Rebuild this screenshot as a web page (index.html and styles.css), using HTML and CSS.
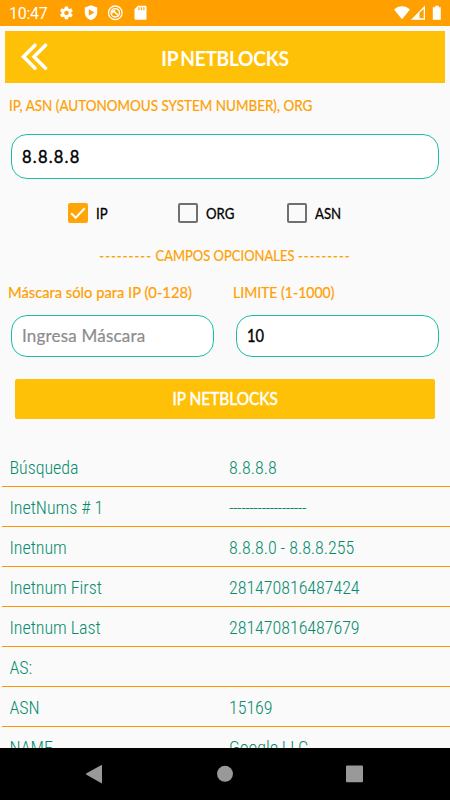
FILE: index.html
```html
<!DOCTYPE html>
<html lang="es">
<head>
<meta charset="utf-8">
<title>IP Netblocks</title>
<link rel="stylesheet" href="styles.css">
</head>
<body>
<div class="status">
  <span class="clock">10:47</span>
  <svg class="status-left" width="90" height="18" viewBox="0 0 90 18" fill="#fff">
    <g transform="translate(-.2 1.2) scale(.64)"><path d="M19.4 13a7.500 7.500 0 0 0 0-2l2.100-1.600a.5.5 0 0 0 .1-.7l-2-3.400a.5.5 0 0 0-.6-.2l-2.500 1a7.300 7.300 0 0 0-1.700-1l-.4-2.700a.5.5 0 0 0-.5-.4h-4a.5.5 0 0 0-.5.400L9 5.100a7.300 7.300 0 0 0-1.700 1l-2.500-1a.5.5 0 0 0-.6.200l-2 3.400a.5.5 0 0 0 .1.700L4.500 11a7.500 7.500 0 0 0 0 2l-2.200 1.600a.5.5 0 0 0-.1.700l2 3.400c.1.200.4.300.6.200l2.500-1c.5.400 1.100.7 1.700 1l.4 2.700c0 .2.200.4.500.4h4c.2 0 .5-.2.5-.4l.4-2.700a7.300 7.300 0 0 0 1.700-1l2.500 1c.2.100.5 0 .6-.2l2-3.400a.5.5 0 0 0-.1-.7zM12 15.500a3.500 3.500 0 1 1 0-7 3.500 3.500 0 0 1 0 7z"/></g>
    <path fill-rule="evenodd" d="M32 1.200l6.200 2.400v5c0 3.600-2.600 6.500-6.200 7.600-3.600-1.100-6.200-4-6.200-7.600v-5zM29.800 5.300v6.400L35.400 8.500z"/>
    <g fill="none" stroke="#fff" stroke-width="1.300"><circle cx="56.300" cy="8.800" r="6.800"/><circle cx="56.300" cy="8.800" r="4.200"/><path d="M53.300 9.200q.2-2.600 3-2.600M54.800 7.300l5 4.700" stroke-width="1.500"/></g>
    <path fill-rule="evenodd" d="M79 1.700h7.300a1.200 1.200 0 0 1 1.200 1.200v11.600a1.200 1.200 0 0 1-1.200 1.200h-9.600a1.200 1.200 0 0 1-1.200-1.200V5.200zM79.300 3.200v3h1.200v-3zM81.800 3.200v3H83v-3zM84.300 3.200v3h1.200v-3z"/>
  </svg>
  <svg class="status-right" width="50" height="18" viewBox="0 0 50 18" fill="#fff">
    <path d="M0 5.500C4.500 1 11.500 1 16 5.500L8 15.300z"/>
    <path fill-rule="evenodd" d="M31 1.500v14.300H17zM25.500 8.700v5.600h4.200V5z"/>
    <path d="M41.200 1.700h3.600v1.500h2v12.600h-8V3.200h2.400z"/>
  </svg>
</div>
<main class="screen">
  <header class="bar">
    <svg class="back" width="27" height="28" viewBox="0 0 27 28" fill="none" stroke="#fff" stroke-width="3.500" stroke-linecap="round"><path d="M14 2.200L2.500 13.700 14 25.200M24.500 2.200L13 13.700l11.500 11.500"/></svg>
    <h1 class="title">IP NETBLOCKS</h1>
  </header>
  <p class="label lead">IP, ASN (AUTONOMOUS SYSTEM NUMBER), ORG</p>
  <div class="field wide"><span class="value ip">8.8.8.8</span></div>
  <div class="checks">
    <div class="check"><svg width="20" height="20" viewBox="0 0 20 20"><rect width="20" height="20" rx="2" fill="#ffa505"/><path d="M3.200 10.300l4.500 4.500 9-9.500" fill="none" stroke="#fff" stroke-width="2"/></svg><span>IP</span></div>
    <div class="check"><i class="box"></i><span>ORG</span></div>
    <div class="check"><i class="box"></i><span>ASN</span></div>
  </div>
  <p class="optional"><span class="dashes">---------</span><span>CAMPOS OPCIONALES</span><span class="dashes">---------</span></p>
  <div class="pair">
    <div><p class="label mask">Máscara sólo para IP (0-128)</p><div class="field"><span class="value hint">Ingresa Máscara</span></div></div>
    <div><p class="label limit">LIMITE (1-1000)</p><div class="field"><span class="value ten">10</span></div></div>
  </div>
  <div class="button"><span>IP NETBLOCKS</span></div>
  <section class="results">
    <div class="row"><span>Búsqueda</span><span>8.8.8.8</span></div>
    <div class="row"><span>InetNums # 1</span><span class="rule">-------------------</span></div>
    <div class="row"><span>Inetnum</span><span>8.8.8.0 - 8.8.8.255</span></div>
    <div class="row"><span>Inetnum First</span><span>281470816487424</span></div>
    <div class="row"><span>Inetnum Last</span><span>281470816487679</span></div>
    <div class="row"><span>AS:</span><span></span></div>
    <div class="row"><span>ASN</span><span>15169</span></div>
    <div class="row"><span>NAME</span><span>Google LLC</span></div>
  </section>
</main>
<nav class="nav">
  <svg width="450" height="52" viewBox="0 0 450 52" fill="#999"><path d="M86.500 25.200L101 17.200q1-.5 1 .6v16.800q0 1-1 .5L86.500 26.800q-1-.8 0-1.600z"/><circle cx="225" cy="25.800" r="8"/><rect x="346" y="17.500" width="17" height="16.800" rx="1"/></svg>
</nav>
</body>
</html>
```
FILE: styles.css
```css
* { box-sizing: border-box; }
body {
  margin: 0; width: 450px; height: 800px; overflow: hidden;
  display: flex; flex-direction: column;
  background: #fafafa; color: #000; font-family: Lato, "Open Sans", sans-serif;
}
p, h1 { margin: 0; }
span { white-space: nowrap; }
.status { flex: none; height: 26px; display: flex; align-items: center; background: #ffa000; padding: 0 6px 0 9px; }
.clock { font: 400 16px/26px Roboto, sans-serif; color: #fff; width: 50px; letter-spacing: -.3px; padding-top: 2px; }
.status-left { margin-top: -1px; }
.status-right { margin-left: auto; margin-top: -1px; }
.screen { flex: 1; min-height: 0; overflow: hidden; display: flex; flex-direction: column; }
.bar { flex: none; height: 52px; margin: 5px 5px 0; background: #ffc107; display: grid; grid-template-columns: 44px 1fr 44px; align-items: center; }
.back { margin: -1px 0 0 16px; }
.title { font-size: 21px; line-height: 52px; font-weight: 700; color: #fff; text-align: center; white-space: nowrap; letter-spacing: -.3px; word-spacing: -2px; transform: scaleX(.91); padding-top: 1px; }
.label { color: #ffa000; font-size: 15px; line-height: 20px; white-space: nowrap; transform-origin: left; -webkit-text-stroke: .2px; }
.lead { margin: 12px 9px 1px; flex: none; transform: scaleX(.898); }
.field { height: 42px; border: 1px solid #1dbf9f; border-radius: 16px; background: #fff; display: flex; align-items: center; padding: 0 10px 1px; }
.wide { flex: none; height: 45px; margin: 18px 11px 0; }
.value { font-size: 17px; transform-origin: left; -webkit-text-stroke: .4px; }
.ip { font-size: 18px; letter-spacing: 1.3px; transform: scaleX(.92); }
.hint { color: #8c8c8c; letter-spacing: .2px; -webkit-text-stroke: .2px; }
.ten { transform: scaleX(.86); }
.checks { flex: none; display: grid; grid-template-columns: 109.500px 109.500px 1fr; height: 20px; margin: 24px 0 0 68px; }
.check { display: flex; gap: 8px; align-items: center; font-size: 15px; -webkit-text-stroke: .3px; }
.check span { transform: scaleX(.88); transform-origin: left; }
.box { width: 20px; height: 20px; border: 2px solid #707070; border-radius: 2px; }
.optional { flex: none; display: flex; justify-content: center; gap: 4px; margin-top: 22px; font-size: 15px; line-height: 20px; color: #ffa000; -webkit-text-stroke: .2px; transform: scaleX(.866); }
.dashes { letter-spacing: 1.2px; }
.pair { flex: none; display: grid; grid-template-columns: 203px 203px; gap: 22px; margin: 17px 11px 0; }
.pair .label { margin: 0 0 13px -3px; }
.mask { transform: scaleX(.982); }
.limit { transform: scaleX(.935); }
.button { flex: none; height: 40px; margin: 22px 15px 0; background: #ffc107; border-radius: 2px; color: #fff; font-size: 17px; line-height: 40px; text-align: center; -webkit-text-stroke: .5px; }
.button span { display: inline-block; transform: scaleX(.905); }
.results { margin: 28px 0 0 2px; flex: none; }
.row { height: 40px; border-bottom: 1px solid #ff9800; display: grid; grid-template-columns: 219.500px 1fr; padding-left: 7.500px; color: #078b6d; font: 340 18px/41px "Roboto Condensed", Roboto, sans-serif; font-stretch: 75%; letter-spacing: -.05px; }
.rule { letter-spacing: -.6px; }
.nav { flex: none; height: 52px; background: #000; }
.nav svg { display: block; }
```
